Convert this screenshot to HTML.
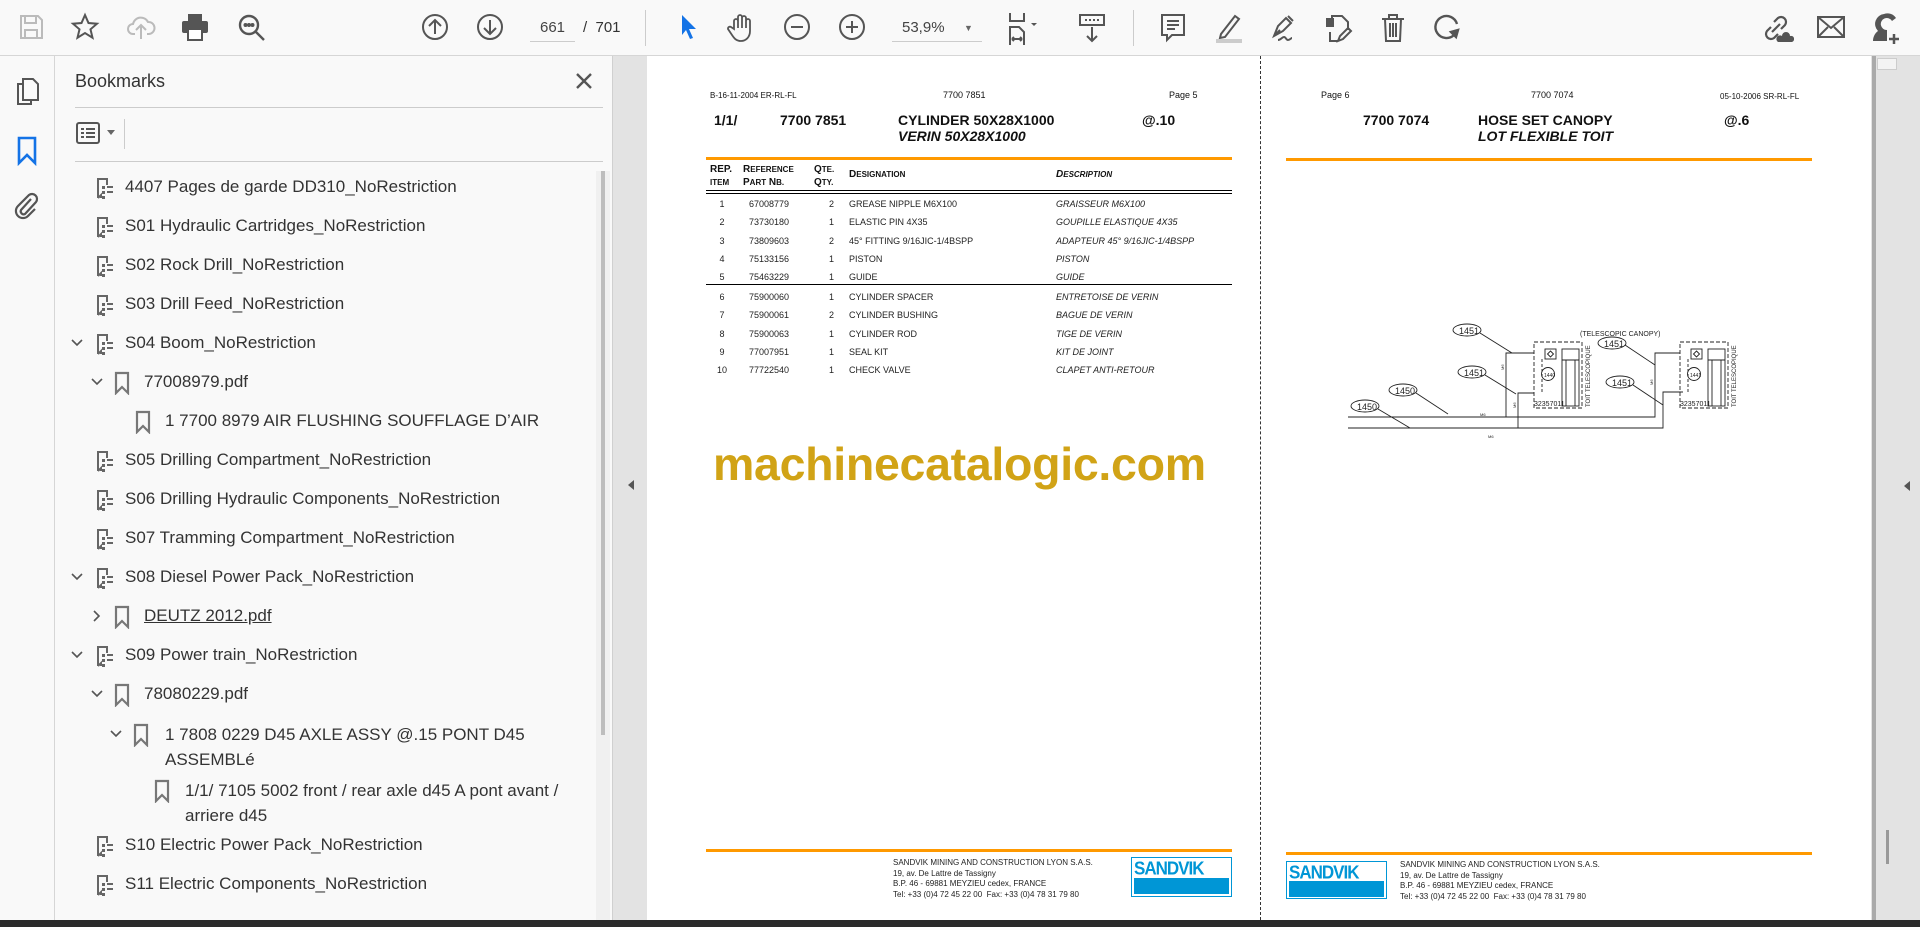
<!DOCTYPE html>
<html><head><meta charset="utf-8"><style>
*{margin:0;padding:0;box-sizing:border-box}
body{width:1920px;height:927px;overflow:hidden;background:#fff;font-family:"Liberation Sans",sans-serif;position:relative}
.a{position:absolute}
#tb{left:0;top:0;width:1920px;height:56px;background:#f9f9f9;border-bottom:1px solid #d6d6d6}
#tb svg{position:absolute;top:12px}
#rail{left:0;top:56px;width:55px;height:864px;background:#f9f9f9;border-right:1px solid #d6d6d6}
#panel{left:55px;top:56px;width:557px;height:864px;background:#f9f9f9}
.bm{position:absolute;font-size:17px;color:#333;white-space:nowrap;line-height:22px}
.gap{background:#e3e3e3}
.pg{background:#fff}
.t{position:absolute;white-space:nowrap;color:#111}
.s7{font-size:8px}
.row{font-size:9px;color:#222}
.it{font-style:italic}
.h{font-weight:bold;font-size:14px}
</style></head><body>
<div id="tb" class="a">
<svg style="left:16px" width="30" height="30" viewBox="0 0 30 30" fill="none" stroke="#bbb" stroke-width="2"><path d="M5 4h17l4 4v18H5z"/><path d="M9 4v7h11V4M9 26v-8h12v8"/></svg>
<svg style="left:70px" width="30" height="30" viewBox="0 0 30 30" fill="none" stroke="#555" stroke-width="2"><path d="M15 3l3.5 8 8.5.7-6.5 5.6 2 8.4L15 21l-7.5 4.7 2-8.4L3 11.7l8.5-.7z"/></svg>
<svg style="left:126px" width="30" height="30" viewBox="0 0 30 30" fill="none" stroke="#bbb" stroke-width="2"><path d="M9 22H7a5 5 0 0 1 0-10 8 8 0 0 1 15-2 6 6 0 0 1 1 12h-2M15 27V14M10 18l5-5 5 5"/></svg>
<svg style="left:179px" width="32" height="30" viewBox="0 0 32 30" fill="#555"><rect x="9" y="2" width="14" height="7"/><rect x="3" y="9" width="26" height="12" rx="2"/><rect x="9" y="17" width="14" height="11" fill="#fff" stroke="#555" stroke-width="2"/></svg>
<svg style="left:236px" width="32" height="32" viewBox="0 0 32 32" fill="none" stroke="#555" stroke-width="2.4"><circle cx="13" cy="13" r="9"/><path d="M20 20l8 8"/><circle cx="9.5" cy="13" r=".8" fill="#555"/><circle cx="13" cy="13" r=".8" fill="#555"/><circle cx="16.5" cy="13" r=".8" fill="#555"/></svg>
<svg style="left:420px" width="30" height="30" viewBox="0 0 30 30" fill="none" stroke="#555" stroke-width="2"><circle cx="15" cy="15" r="12"/><path d="M15 22V8M9 14l6-6 6 6"/></svg>
<svg style="left:475px" width="30" height="30" viewBox="0 0 30 30" fill="none" stroke="#555" stroke-width="2"><circle cx="15" cy="15" r="12"/><path d="M15 8v14M9 16l6 6 6-6"/></svg>
<div class="a" style="left:530px;top:14px;width:45px;height:28px;border-bottom:1px solid #ccc;font-size:15px;color:#444;text-align:center;line-height:28px">661</div>
<div class="a" style="left:583px;top:14px;font-size:15px;color:#333;line-height:28px">/&nbsp; 701</div>
<div class="a" style="left:645px;top:10px;width:1px;height:36px;background:#ccc"></div>
<svg style="left:676px" width="26" height="30" viewBox="0 0 26 30" fill="#1473e6"><path d="M6 3l14 14h-7l4 9-3 1-4-9-4 5z"/></svg>
<svg style="left:726px" width="30" height="32" viewBox="0 0 30 32" fill="none" stroke="#555" stroke-width="1.8"><path d="M8 17V9a2 2 0 0 1 4 0v7V5a2 2 0 0 1 4 0v11V6a2 2 0 0 1 4 0v10V9a2 2 0 0 1 4 0v10c0 6-4 10-9 10s-7-3-9-6l-4-6a2 2 0 0 1 3-2z"/></svg>
<svg style="left:782px" width="30" height="30" viewBox="0 0 30 30" fill="none" stroke="#555" stroke-width="2"><circle cx="15" cy="15" r="12"/><path d="M9 15h12"/></svg>
<svg style="left:837px" width="30" height="30" viewBox="0 0 30 30" fill="none" stroke="#555" stroke-width="2"><circle cx="15" cy="15" r="12"/><path d="M9 15h12M15 9v12"/></svg>
<div class="a" style="left:892px;top:14px;width:90px;height:28px;border-bottom:1px solid #ccc;font-size:15px;color:#444;line-height:28px;padding-left:10px">53,9%<span style="position:absolute;left:72px;font-size:9px;color:#666">▼</span></div>
<svg style="left:1006px" width="40" height="34" viewBox="0 0 40 34" fill="none" stroke="#555" stroke-width="2"><path d="M4 1v8h14V1M4 33V15h9l5 5v13M6 27h10M6 27l2-2M6 27l2 2M16 27l-2-2M16 27l-2 2"/><path d="M25 11l3 3 3-3z" fill="#555" stroke="none"/></svg>
<svg style="left:1077px" width="30" height="32" viewBox="0 0 30 32" fill="none" stroke="#555" stroke-width="2"><rect x="3" y="3" width="24" height="10"/><path d="M8 8h2M12 8h2M16 8h2M20 8h2M15 15v14M10 24l5 5 5-5"/></svg>
<div class="a" style="left:1133px;top:10px;width:1px;height:36px;background:#ccc"></div>
<svg style="left:1158px" width="30" height="32" viewBox="0 0 30 32" fill="none" stroke="#555" stroke-width="2"><path d="M4 3h22v20H14l-5 5v-5H4z"/><path d="M9 9h12M9 13h12M9 17h8"/></svg>
<svg style="left:1213px" width="32" height="32" viewBox="0 0 32 32" fill="none" stroke="#555" stroke-width="2"><path d="M8 22L22 4l4 3-14 18-5 1z"/><rect x="3" y="27" width="26" height="4" fill="#ccc" stroke="none"/></svg>
<svg style="left:1268px" width="32" height="32" viewBox="0 0 32 32" fill="none" stroke="#555" stroke-width="2"><path d="M6 24l4-10 8-8 5 5-8 8zM6 24l6-6M20 4l5 5M10 28c3 0 4-3 6-3s2 3 4 3 3-2 4-2"/></svg>
<svg style="left:1322px" width="32" height="32" viewBox="0 0 32 32" fill="none" stroke="#555" stroke-width="2"><path d="M10 8V4h10l6 6v8M8 20v9h8"/><rect x="5" y="7" width="6" height="7" fill="#555"/><path d="M16 29l2-5 8-8 3 3-8 8z"/></svg>
<svg style="left:1378px" width="30" height="32" viewBox="0 0 30 32" fill="none" stroke="#555" stroke-width="2"><path d="M4 7h22M11 7V3h8v4M7 7l1 22h14l1-22M12 11v14M15 11v14M18 11v14"/></svg>
<svg style="left:1432px" width="30" height="32" viewBox="0 0 30 32" fill="none" stroke="#555" stroke-width="2.4"><path d="M22 23A11 11 0 1 1 25 12"/><path d="M19 20l5 5 2-7z" fill="#555"/></svg>
<svg style="left:1760px" width="34" height="32" viewBox="0 0 34 32" fill="none" stroke="#555" stroke-width="2.2"><path d="M14 10l4-4a5 5 0 0 1 7 7l-4 4M18 22l-4 4a5 5 0 0 1-7-7l4-4M12 20l8-8"/><path d="M18 30h14a3 3 0 0 0-2-6 4 4 0 0 0-8 0 3 3 0 0 0-4 6z" fill="#555" stroke="none"/></svg>
<svg style="left:1815px" width="32" height="30" viewBox="0 0 32 30" fill="none" stroke="#555" stroke-width="2"><rect x="3" y="5" width="26" height="20"/><path d="M3 5l13 11L29 5M3 25l10-10M29 25L19 15"/></svg>
<svg style="left:1870px" width="34" height="34" viewBox="0 0 34 34" fill="#555"><path d="M14 2a10 10 0 0 0-6 17c-3 2-5 6-5 10h14V18a6 6 0 1 1 5-9l4-3A10 10 0 0 0 14 2z"/><path d="M24 22v10M19 27h10" stroke="#555" stroke-width="2.5"/></svg>
</div>
<div id="rail" class="a">
<svg class="a" style="left:13px;top:20px" width="30" height="32" viewBox="0 0 30 32" fill="none" stroke="#555" stroke-width="2"><path d="M9 8h-4v20h13v-4"/><path d="M10 3h10l5 5v16H10z"/></svg>
<svg class="a" style="left:14px;top:79px" width="26" height="32" viewBox="0 0 26 32" fill="none" stroke="#1473e6" stroke-width="2.6"><path d="M5 3h16v25l-8-8-8 8z"/></svg>
<svg class="a" style="left:11px;top:133px" width="30" height="32" viewBox="0 0 30 32" fill="none" stroke="#555" stroke-width="2.2"><path d="M20 10L10 21a3 3 0 0 0 4 4l11-12a5 5 0 0 0-7-7L7 17a7 7 0 0 0 10 10l7-7"/></svg>
</div>
<div class="a" style="left:55px;top:140px;width:0;height:0;border-top:9px solid transparent;border-bottom:9px solid transparent;border-right:9px solid #d6d6d6"></div>
<div id="panel" class="a">
<div class="a" style="left:20px;top:15px;font-size:18px;color:#333">Bookmarks</div>
<svg class="a" style="left:520px;top:16px" width="18" height="18" viewBox="0 0 18 18" stroke="#555" stroke-width="2.4"><path d="M2 2l14 14M16 2L2 16"/></svg>
<div class="a" style="left:20px;top:51px;width:528px;height:1px;background:#ccc"></div>
<svg class="a" style="left:20px;top:64px" width="26" height="26" viewBox="0 0 26 26" fill="none" stroke="#555" stroke-width="2"><rect x="2" y="3" width="22" height="20" rx="2"/><path d="M6 9h3M6 13h3M6 17h3M11 9h9M11 13h9M11 17h9"/></svg>
<div class="a" style="left:52px;top:74px;border-left:4px solid transparent;border-right:4px solid transparent;border-top:5px solid #666"></div>
<div class="a" style="left:69px;top:63px;width:1px;height:30px;background:#ccc"></div>
<div class="a" style="left:20px;top:105px;width:528px;height:1px;background:#ccc"></div>
<div class="a" style="left:541px;top:115px;width:14px;height:749px;background:#f0f0f0"></div>
<div class="a" style="left:546px;top:115px;width:4px;height:564px;background:#bdbdbd"></div>
</div>
<svg width="0" height="0" style="position:absolute"><defs>
<symbol id="sec" viewBox="0 0 20 24"><path d="M3 22V3h9v6M3 22l3-3v3" fill="none" stroke="#666" stroke-width="2"/><path d="M7 10h3v3H7zM12 10h6v2h-6zM7 15h3v3H7zM12 15h6v2h-6zM7 20h3v3H7z" fill="#666"/></symbol>
<symbol id="bk" viewBox="0 0 20 24"><path d="M4 2h12v20l-6-6-6 6z" fill="none" stroke="#777" stroke-width="2.2"/></symbol>
<symbol id="chv" viewBox="0 0 14 14"><path d="M2 4l5 5 5-5" fill="none" stroke="#555" stroke-width="1.6"/></symbol>
<symbol id="chr" viewBox="0 0 14 14"><path d="M4 2l5 5-5 5" fill="none" stroke="#555" stroke-width="1.6"/></symbol>
</defs></svg>
<div class="a" style="left:0;top:0">
<svg class="a" style="left:95px;top:176px" width="20" height="24"><use href="#sec"/></svg><div class="bm" style="left:125px;top:176px">4407 Pages de garde DD310_NoRestriction</div>
<svg class="a" style="left:95px;top:215px" width="20" height="24"><use href="#sec"/></svg><div class="bm" style="left:125px;top:215px">S01 Hydraulic Cartridges_NoRestriction</div>
<svg class="a" style="left:95px;top:254px" width="20" height="24"><use href="#sec"/></svg><div class="bm" style="left:125px;top:254px">S02 Rock Drill_NoRestriction</div>
<svg class="a" style="left:95px;top:293px" width="20" height="24"><use href="#sec"/></svg><div class="bm" style="left:125px;top:293px">S03 Drill Feed_NoRestriction</div>
<svg class="a" style="left:70px;top:336px" width="14" height="14"><use href="#chv"/></svg><svg class="a" style="left:95px;top:332px" width="20" height="24"><use href="#sec"/></svg><div class="bm" style="left:125px;top:332px">S04 Boom_NoRestriction</div>
<svg class="a" style="left:90px;top:375px" width="14" height="14"><use href="#chv"/></svg><svg class="a" style="left:112px;top:371px" width="20" height="24"><use href="#bk"/></svg><div class="bm" style="left:144px;top:371px">77008979.pdf</div>
<svg class="a" style="left:133px;top:410px" width="20" height="24"><use href="#bk"/></svg><div class="bm" style="left:165px;top:410px">1 7700 8979 AIR FLUSHING SOUFFLAGE D’AIR</div>
<svg class="a" style="left:95px;top:449px" width="20" height="24"><use href="#sec"/></svg><div class="bm" style="left:125px;top:449px">S05 Drilling Compartment_NoRestriction</div>
<svg class="a" style="left:95px;top:488px" width="20" height="24"><use href="#sec"/></svg><div class="bm" style="left:125px;top:488px">S06 Drilling Hydraulic Components_NoRestriction</div>
<svg class="a" style="left:95px;top:527px" width="20" height="24"><use href="#sec"/></svg><div class="bm" style="left:125px;top:527px">S07 Tramming Compartment_NoRestriction</div>
<svg class="a" style="left:70px;top:570px" width="14" height="14"><use href="#chv"/></svg><svg class="a" style="left:95px;top:566px" width="20" height="24"><use href="#sec"/></svg><div class="bm" style="left:125px;top:566px">S08 Diesel Power Pack_NoRestriction</div>
<svg class="a" style="left:90px;top:609px" width="14" height="14"><use href="#chr"/></svg><svg class="a" style="left:112px;top:605px" width="20" height="24"><use href="#bk"/></svg><div class="bm" style="left:144px;top:605px;text-decoration:underline">DEUTZ 2012.pdf</div>
<svg class="a" style="left:70px;top:648px" width="14" height="14"><use href="#chv"/></svg><svg class="a" style="left:95px;top:644px" width="20" height="24"><use href="#sec"/></svg><div class="bm" style="left:125px;top:644px">S09 Power train_NoRestriction</div>
<svg class="a" style="left:90px;top:687px" width="14" height="14"><use href="#chv"/></svg><svg class="a" style="left:112px;top:683px" width="20" height="24"><use href="#bk"/></svg><div class="bm" style="left:144px;top:683px">78080229.pdf</div>
<svg class="a" style="left:109px;top:727px" width="14" height="14"><use href="#chv"/></svg><svg class="a" style="left:131px;top:723px" width="20" height="24"><use href="#bk"/></svg><div class="bm" style="left:165px;top:722px;line-height:25px">1 7808 0229 D45 AXLE ASSY @.15 PONT D45<br>ASSEMBLé</div>
<svg class="a" style="left:152px;top:779px" width="20" height="24"><use href="#bk"/></svg><div class="bm" style="left:185px;top:778px;line-height:25px">1/1/ 7105 5002 front / rear axle d45 A pont avant /<br>arriere d45</div>
<svg class="a" style="left:95px;top:834px" width="20" height="24"><use href="#sec"/></svg><div class="bm" style="left:125px;top:834px">S10 Electric Power Pack_NoRestriction</div>
<svg class="a" style="left:95px;top:873px" width="20" height="24"><use href="#sec"/></svg><div class="bm" style="left:125px;top:873px">S11 Electric Components_NoRestriction</div>
</div>
<div class="a gap" style="left:612px;top:56px;width:35px;height:864px;border-left:1px solid #d0d0d0"></div>
<div class="a" style="left:628px;top:480px;border-top:5px solid transparent;border-bottom:5px solid transparent;border-right:6px solid #555"></div>
<div class="a gap" style="left:1871px;top:56px;width:49px;height:864px"></div>
<div class="a" style="left:1872px;top:56px;width:4px;height:864px;background:#aaa"></div>
<div class="a" style="left:1877px;top:58px;width:20px;height:12px;background:#f3f3f3;border:1px solid #ccc"></div>
<div class="a" style="left:1886px;top:830px;width:3px;height:34px;background:#999"></div>
<div class="a" style="left:1904px;top:481px;border-top:5px solid transparent;border-bottom:5px solid transparent;border-right:6px solid #555"></div>
<div class="a pg" style="left:647px;top:56px;width:1224px;height:864px"></div>
<div class="a" style="left:1260px;top:56px;width:0;height:864px;border-left:1px dashed #333"></div>
<div class="t s7" style="left:710px;top:91px">B-16-11-2004 ER-RL-FL</div>
<div class="t" style="left:943px;top:90px;font-size:9px">7700 7851</div>
<div class="t" style="left:1169px;top:90px;font-size:9px">Page 5</div>
<div class="t h" style="left:714px;top:112px">1/1/</div>
<div class="t h" style="left:780px;top:112px">7700 7851</div>
<div class="t h" style="left:898px;top:112px">CYLINDER 50X28X1000</div>
<div class="t h it" style="left:898px;top:128px">VERIN 50X28X1000</div>
<div class="t h" style="left:1142px;top:112px">@.10</div>
<div class="a" style="left:706px;top:157px;width:526px;height:3px;background:#f90"></div>
<div class="t" style="left:710px;top:163px;font-size:10px;font-weight:bold;line-height:13px">REP.<br><span style="font-size:8px">ITEM</span></div>
<div class="t" style="left:743px;top:163px;font-size:10px;font-weight:bold;line-height:13px">R<span style="font-size:8px">EFERENCE</span><br>P<span style="font-size:8px">ART</span> N<span style="font-size:8px">B.</span></div>
<div class="t" style="left:814px;top:163px;font-size:10px;font-weight:bold;line-height:13px">Q<span style="font-size:8px">TE.</span><br>Q<span style="font-size:8px">TY.</span></div>
<div class="t" style="left:849px;top:169px;font-size:10px;font-weight:bold">D<span style="font-size:8px">ESIGNATION</span></div>
<div class="t it" style="left:1056px;top:169px;font-size:10px;font-weight:bold">D<span style="font-size:8px">ESCRIPTION</span></div>
<div class="a" style="left:706px;top:190px;width:526px;height:1px;background:#000"></div>
<div class="a" style="left:706px;top:193px;width:526px;height:1px;background:#000"></div>
<div class="a" style="left:706px;top:284px;width:526px;height:1px;background:#000"></div>
<div class="a row" style="left:706px;top:195px;width:530px;line-height:18.3px">
<div class="a" style="left:0;top:0;width:32px;text-align:center">1<br>2<br>3<br>4<br>5</div>
<div class="a" style="left:43px;top:0">67008779<br>73730180<br>73809603<br>75133156<br>75463229</div>
<div class="a" style="left:118px;top:0;width:10px;text-align:right">2<br>1<br>2<br>1<br>1</div>
<div class="a" style="left:143px;top:0;white-space:nowrap">GREASE NIPPLE M6X100<br>ELASTIC PIN 4X35<br>45° FITTING 9/16JIC-1/4BSPP<br>PISTON<br>GUIDE</div>
<div class="a it" style="left:350px;top:0;white-space:nowrap">GRAISSEUR M6X100<br>GOUPILLE ELASTIQUE 4X35<br>ADAPTEUR 45° 9/16JIC-1/4BSPP<br>PISTON<br>GUIDE</div>
</div>
<div class="a row" style="left:706px;top:288px;width:530px;line-height:18.3px">
<div class="a" style="left:0;top:0;width:32px;text-align:center">6<br>7<br>8<br>9<br>10</div>
<div class="a" style="left:43px;top:0">75900060<br>75900061<br>75900063<br>77007951<br>77722540</div>
<div class="a" style="left:118px;top:0;width:10px;text-align:right">1<br>2<br>1<br>1<br>1</div>
<div class="a" style="left:143px;top:0;white-space:nowrap">CYLINDER SPACER<br>CYLINDER BUSHING<br>CYLINDER ROD<br>SEAL KIT<br>CHECK VALVE</div>
<div class="a it" style="left:350px;top:0;white-space:nowrap">ENTRETOISE DE VERIN<br>BAGUE DE VERIN<br>TIGE DE VERIN<br>KIT DE JOINT<br>CLAPET ANTI-RETOUR</div>
</div>
<div class="t" style="left:713px;top:437px;font-size:46.5px;font-weight:bold;color:#d1a316;letter-spacing:-0.3px">machinecatalogic.com</div>
<div class="a" style="left:706px;top:849px;width:526px;height:3px;background:#f90"></div>
<div class="t" style="left:893px;top:858px;font-size:8px;line-height:10.6px;color:#222">SANDVIK MINING AND CONSTRUCTION LYON S.A.S.<br>19, av. De Lattre de Tassigny<br>B.P. 46 - 69881 MEYZIEU cedex, FRANCE<br>Tel: +33 (0)4 72 45 22 00&nbsp; Fax: +33 (0)4 78 31 79 80</div>
<div class="a" style="left:1131px;top:857px;width:101px;height:40px;border:1px solid #0096d6;background:#fff"><div class="a" style="left:2px;top:1px;font-size:17px;font-weight:bold;color:#0096d6;letter-spacing:-1px;transform:scaleY(1.1)">SANDVIK</div><div class="a" style="left:2px;top:20px;width:95px;height:16px;background:#0096d6"></div></div>
<div class="t" style="left:1321px;top:90px;font-size:9px">Page 6</div>
<div class="t" style="left:1531px;top:90px;font-size:9px">7700 7074</div>
<div class="t s7" style="left:1720px;top:92px">05-10-2006 SR-RL-FL</div>
<div class="t h" style="left:1363px;top:112px">7700 7074</div>
<div class="t h" style="left:1478px;top:112px">HOSE SET CANOPY</div>
<div class="t h it" style="left:1478px;top:128px">LOT FLEXIBLE TOIT</div>
<div class="t h" style="left:1724px;top:112px">@.6</div>
<div class="a" style="left:1286px;top:158px;width:526px;height:3px;background:#f90"></div>
<svg class="a" style="left:1330px;top:310px" width="440" height="140" viewBox="0 0 440 140" fill="none" stroke="#222" stroke-width="0.9" font-family="Liberation Sans" >
<path d="M18 107H325V43H350M18 118H333V82H353"/>
<path d="M176 107V43H204M188 118V83H204"/>
<rect x="204" y="32" width="48" height="66" stroke-dasharray="4 2"/>
<rect x="232" y="39" width="17" height="57"/><path d="M236 50V96M245 50V96M232 50H249"/>
<rect x="215" y="39" width="11" height="10"/><path d="M220.5 41l3 3-3 3-3-3z"/>
<path d="M212 49V82" stroke-dasharray="3 2"/>
<circle cx="218" cy="64" r="6.5"/>
<rect x="350" y="32" width="48" height="66" stroke-dasharray="4 2"/>
<rect x="378" y="39" width="17" height="57"/><path d="M382 50V96M391 50V96M378 50H395"/>
<rect x="361" y="39" width="11" height="10"/><path d="M366.5 41l3 3-3 3-3-3z"/>
<path d="M358 49V82" stroke-dasharray="3 2"/>
<circle cx="364" cy="64" r="6.5"/>
<ellipse cx="137" cy="20" rx="14" ry="6"/><path d="M150 23L182 43"/>
<ellipse cx="142" cy="62" rx="14" ry="6"/><path d="M155 65L186 84"/>
<ellipse cx="73" cy="80" rx="14" ry="6"/><path d="M86 83L118 104"/>
<ellipse cx="35" cy="96" rx="14" ry="6"/><path d="M48 99L80 118"/>
<ellipse cx="282" cy="33" rx="14" ry="6"/><path d="M295 35L325 55"/>
<ellipse cx="290" cy="72" rx="14" ry="6"/><path d="M303 75L333 95"/>
<g fill="#222" stroke="none" font-size="9"><text x="129" y="24">1451</text><text x="134" y="66">1451</text><text x="65" y="84">1450</text><text x="27" y="100">1450</text><text x="274" y="37">1451</text><text x="282" y="76">1451</text>
<text x="250" y="26" font-size="7">(TELESCOPIC CANOPY)</text>
<text x="204" y="96" font-size="7">32357011</text><text x="350" y="96" font-size="7">32357011</text>
<text x="214" y="67" font-size="5">1440</text><text x="360" y="67" font-size="5">1441</text>
<text x="150" y="106" font-size="4">M6</text><text x="158" y="128" font-size="4">M6</text>
<text transform="translate(260 97) rotate(-90)" font-size="6">TOIT TELESCOPIQUE</text>
<text transform="translate(406 97) rotate(-90)" font-size="6">TOIT TELESCOPIQUE</text>
<text transform="translate(174 60) rotate(-90)" font-size="4">M6</text><text transform="translate(186 98) rotate(-90)" font-size="4">M6</text><text transform="translate(323 75) rotate(-90)" font-size="4">M6</text></g>
</svg>
<div class="a" style="left:1286px;top:852px;width:526px;height:3px;background:#f90"></div>
<div class="a" style="left:1286px;top:861px;width:101px;height:38px;border:1px solid #0096d6;background:#fff"><div class="a" style="left:2px;top:1px;font-size:17px;font-weight:bold;color:#0096d6;letter-spacing:-1px;transform:scaleY(1.1)">SANDVIK</div><div class="a" style="left:2px;top:19px;width:95px;height:16px;background:#0096d6"></div></div>
<div class="t" style="left:1400px;top:860px;font-size:8px;line-height:10.6px;color:#222">SANDVIK MINING AND CONSTRUCTION LYON S.A.S.<br>19, av. De Lattre de Tassigny<br>B.P. 46 - 69881 MEYZIEU cedex, FRANCE<br>Tel: +33 (0)4 72 45 22 00&nbsp; Fax: +33 (0)4 78 31 79 80</div>
<div class="a" style="left:0;top:920px;width:1920px;height:7px;background:#2b2b2b"></div>
</body></html>
